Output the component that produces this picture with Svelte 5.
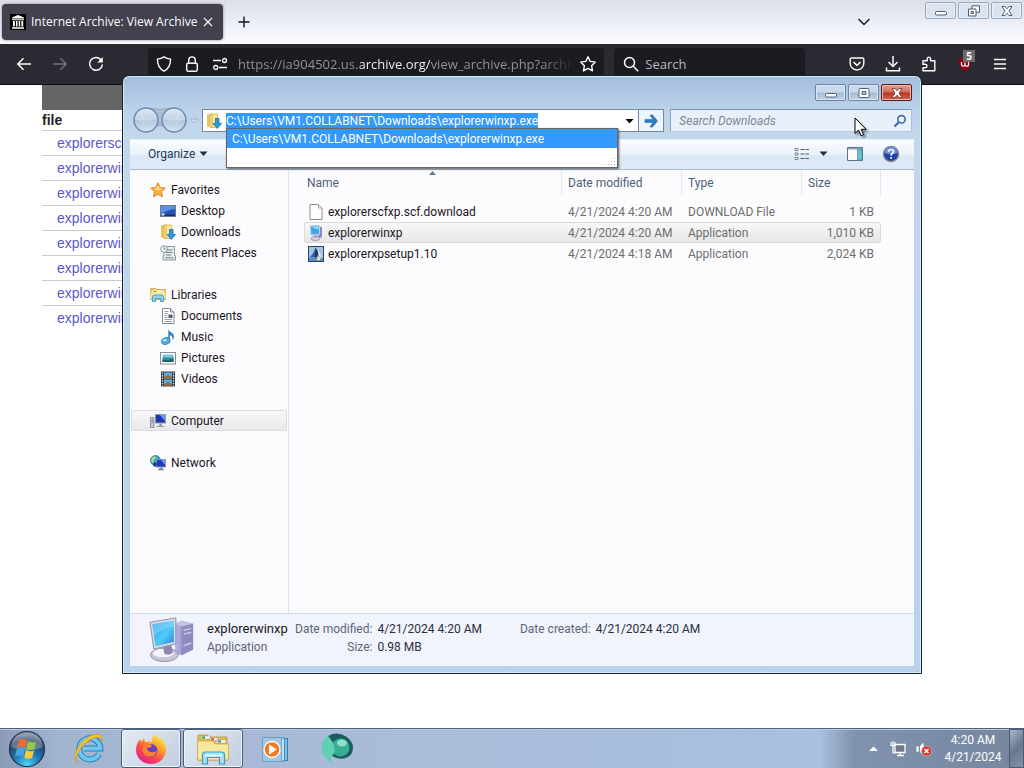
<script>
  import { onMount } from 'svelte';

  let address = $state('C:\\Users\\VM1.COLLABNET\\Downloads\\explorerwinxp.exe');
  let url = $state('https://ia904502.us.archive.org/view_archive.php?archive=/items');
  let addressBox;

  const archiveFiles = [
    'explorerscfxp.scf',
    'explorerwinxp.exe',
    'explorerwinxp.exe',
    'explorerwinxp.exe',
    'explorerwinxp.exe',
    'explorerwinxp.exe',
    'explorerwinxp.exe',
    'explorerwinxp.exe'
  ];

  const places = [
    { name: 'Favorites', icon: 'star', items: [
      { name: 'Desktop', icon: 'desktop' },
      { name: 'Downloads', icon: 'downloads' },
      { name: 'Recent Places', icon: 'recent' }
    ] },
    { name: 'Libraries', icon: 'libraries', items: [
      { name: 'Documents', icon: 'document' },
      { name: 'Music', icon: 'music' },
      { name: 'Pictures', icon: 'pictures' },
      { name: 'Videos', icon: 'videos' }
    ] },
    { name: 'Computer', icon: 'computer', current: true, items: [] },
    { name: 'Network', icon: 'network', items: [] }
  ];

  const files = [
    { name: 'explorerscfxp.scf.download', date: '4/21/2024 4:20 AM', type: 'DOWNLOAD File', size: '1 KB', icon: 'blank' },
    { name: 'explorerwinxp', date: '4/21/2024 4:20 AM', type: 'Application', size: '1,010 KB', icon: 'xp', selected: true },
    { name: 'explorerxpsetup1.10', date: '4/21/2024 4:18 AM', type: 'Application', size: '2,024 KB', icon: 'setup' }
  ];

  onMount(() => {
    addressBox.focus();
    addressBox.select();
  });
</script>

{#snippet icon(name)}
  <svg class="icon" viewBox="0 0 16 16" aria-hidden="true">
    {#if name === 'star'}
      <path d="M8 .8l2.200 4.700 5.100.6-3.800 3.500 1 5.200L8 12.300l-4.500 2.500 1-5.200L.7 6.100l5.100-.6z" fill="#fbb03a" stroke="#d97b16" stroke-width=".9" stroke-linejoin="round" />
      <path d="M8 2.800l1.500 3.500 3.600.4-5.100 1.800-4.900-1.800 3.400-.4z" fill="#ffe08a" />
    {:else if name === 'desktop'}
      <rect x=".5" y="2.500" width="15" height="11" fill="#2456b8" stroke="#6c7a8c" />
      <path d="M1 3h14v3C9 6 6 9 1 10z" fill="#5b92e6" />
      <path d="M1 11.500h14V13H1z" fill="#14306c" />
      <path d="M1.500 10.500h3v2h-3z" fill="#dfe9f7" />
    {:else if name === 'downloads'}
      <path d="M1 1.500l5-1v14l-5-1z" fill="#e8c75a" />
      <path d="M4 1h7.500v13.500H4z" fill="#f7e79c" stroke="#d9b548" stroke-width=".8" />
      <path d="M6 .8v14" stroke="#cfa83e" stroke-width=".8" />
      <path d="M9.500 5.500h3.500v5h2.500L11.300 15.500 7 10.500h2.500z" fill="#2f9bd8" stroke="#1870ac" stroke-width=".8" />
    {:else if name === 'recent'}
      <path d="M4 1.500h10.500v9H15.500v4.500H3v-4.500h1z" fill="#e6ecec" stroke="#8b9a9a" />
      <path d="M6 5h6.500M6 7.500h6.500M6 10h5M5 12.800h8.500" stroke="#6f8584" />
      <circle cx="4" cy="4" r="3.300" fill="#f5f8f8" stroke="#869696" />
      <path d="M4 2v2.200h1.800" fill="none" stroke="#58706f" stroke-width=".8" />
    {:else if name === 'libraries'}
      <path d="M.7 3.500V1.500h5l1 1h8.600v10H.7z" fill="#efcf65" stroke="#c99f37" stroke-width=".8" />
      <path d="M2.500 3.500h11v2h-11z" fill="#fff8d8" />
      <path d="M3.500 4h3v1h-3z" fill="#64b055" />
      <path d="M.7 5.500h14.600v6H.7z" fill="#f9e9a0" />
      <path d="M2.500 14.500V10q0-2 2-2h7q2 0 2 2v4.500h-3v-3h-5v3z" fill="#8fd2ea" stroke="#3c9cc2" stroke-width=".9" />
    {:else if name === 'document'}
      <path d="M2.500.5h8l3.500 3.500v11.500H2.500z" fill="#fff" stroke="#7d8894" />
      <path d="M10.500.5V4H14" fill="#d6dde4" stroke="#7d8894" />
      <path d="M4.500 3.500h4M4.500 5.500h3.500M4.500 7.500h3M4.500 9.500h3M4.500 11.500h7.500M4.500 13.500h7.500" stroke="#8a96a3" stroke-width=".9" />
      <path d="M8.500 6.500h4v3.500h-4z" fill="#48607a" />
    {:else if name === 'music'}
      <path d="M8.300 0c.6 3.200 6 3.500 5.700 8-.1 1.300-.6 2.300-1.400 3.200.5-3-1-4.300-2.700-4.900V12H8.300z" fill="#3787c6" />
      <ellipse cx="5.800" cy="12" rx="4.400" ry="3.400" transform="rotate(-18 5.800 12)" fill="#4fa9e4" stroke="#2c73b4" stroke-width=".7" />
      <ellipse cx="4.800" cy="11.200" rx="2" ry="1.200" fill="#b4e0f8" />
    {:else if name === 'pictures'}
      <rect x=".5" y="2.500" width="15" height="11.500" fill="#fff" stroke="#849099" />
      <path d="M2.500 4.500h11v7.500h-11z" fill="#7cc6e4" />
      <path d="M2.500 8c4-2 6 1 11-1v5h-11z" fill="#2f8f86" />
      <path d="M2.500 10c4 0 7 0 11-1v3h-11z" fill="#1d5f76" />
    {:else if name === 'videos'}
      <rect x="1" y=".5" width="14" height="15" fill="#343c44" />
      <path d="M4 1.500h8v6H4zM4 8.500h8v6H4z" fill="#58b0e2" />
      <path d="M4 6l4-2 4 2v1.500H4zM4 13l4-2 4 2v1.500H4z" fill="#a3652f" />
      <path d="M2.500 1.500v14M13.500 1.500v14" stroke="#eef3f6" stroke-width="1.200" stroke-dasharray="1.300 1.300" />
    {:else if name === 'computer'}
      <path d="M.5 4.500H4v10H.5z" fill="#c3c9d2" stroke="#7c8694" stroke-width=".8" />
      <path d="M1.500 7H3M1.500 9H3" stroke="#687482" />
      <rect x="5.500" y="1.500" width="10" height="8.500" fill="#1c36b4" stroke="#8c98ae" />
      <path d="M10 2h5v6z" fill="#6d94f0" />
      <path d="M9.300 10.500h2.700v2.500h2.500v1H6.500v-1h2.800z" fill="#929cab" />
    {:else if name === 'network'}
      <circle cx="5.500" cy="5.500" r="5" fill="#3d9dc4" stroke="#246a94" stroke-width=".7" />
      <path d="M2 2.500c2-1.500 4-1.500 4 0s-3 2-2 4-2 2-3-1z" fill="#a5dc88" />
      <rect x="6.500" y="4.500" width="9" height="7.500" fill="#1a3dbc" stroke="#8795ad" />
      <path d="M11 5h4v5z" fill="#6b97f2" />
      <path d="M3.500 7.500h3v4h-3z" fill="#1d2f85" />
      <path d="M9.500 12.500h3v1.500h1.500v1.200H8V14h1.500z" fill="#7b8799" />
    {:else if name === 'blank'}
      <path d="M2 .5h8.500L14 4v11.500H2z" fill="#fff" stroke="#8d8d8d" />
      <path d="M10.500.5V4H14" fill="#eee" stroke="#a5a5a5" />
    {:else if name === 'xp'}
      <path d="M9 1.500l5 .5v10l-4 2z" fill="#8e87c4" />
      <path d="M2 1l9.500-1v9.500L3 10z" fill="#3ba4ea" stroke="#c9d3e4" />
      <path d="M3 2l7.500-.8v3.300z" fill="#9be1fa" />
      <ellipse cx="7.500" cy="13.500" rx="4.500" ry="2" fill="#d6d3e4" stroke="#8d88ac" stroke-width=".8" />
      <path d="M6 10h3v3H6z" fill="#a9a4c8" />
    {:else if name === 'setup'}
      <rect x=".5" y=".5" width="15" height="15" fill="#a9c4e2" stroke="#24436f" />
      <path d="M7.500 1.500c2 3 3 6 3 10h-9C4 9 6.500 6 7.500 1.500z" fill="#2c5fae" />
      <path d="M7.500 1.500c2 3 3 6 3 10H7z" fill="#15376f" />
      <path d="M10 4l3.500 7H11z" fill="#eef5fc" />
      <path d="M1 12h14v3H1z" fill="#5b8cc4" />
      <path d="M9.500 9.500l4 2-1.500 3H8.500z" fill="#e8e3c2" stroke="#7a8798" stroke-width=".6" />
    {/if}
  </svg>
{/snippet}

<div class="screen">
  <main class="browser">
    <header class="tabs">
      <div class="tab">
        <svg class="icon" viewBox="0 0 16 16" aria-hidden="true">
          <path d="M0 0h16v16H0z" fill="#000" />
          <path d="M8 1l6 2.500v1H2v-1zM2 5.300h12v.9H2zM3 7h1.800v5.500H3zM6 7h1.500v5.500H6zM8.700 7h1.500v5.500H8.700zM11.400 7h1.800v5.500h-1.800zM2 13.300h12v1.500H2z" fill="#fff" />
        </svg>
        <span class="tab-title">Internet Archive: View Archive</span>
        <button class="plain" aria-label="Close tab">
          <svg width="12" height="12" viewBox="0 0 12 12"><path d="M2 2l8 8M10 2l-8 8" stroke="#fbfbfe" stroke-width="1.100" /></svg>
        </button>
      </div>
      <button class="plain new-tab" aria-label="New tab">
        <svg width="14" height="14" viewBox="0 0 14 14"><path d="M7 1.500v11M1.500 7h11" stroke="#15141a" stroke-width="1.400" /></svg>
      </button>
      <button class="plain list-tabs" aria-label="List all tabs">
        <svg width="14" height="10" viewBox="0 0 14 10"><path d="M1.500 2L7 7.500 12.500 2" fill="none" stroke="#15141a" stroke-width="1.400" /></svg>
      </button>
      <div class="captions back">
        <button aria-label="Minimize browser"><svg width="14" height="12" viewBox="0 0 14 12"><rect x="1.500" y="6.500" width="11" height="3.500" rx="1" fill="#fff" stroke="#535c6b" /></svg></button>
        <button aria-label="Restore browser"><svg width="14" height="12" viewBox="0 0 14 12"><path d="M5 .8h7.500v6.500H5z" fill="#fff" stroke="#535c6b" /><path d="M1.500 4h7.500v7H1.500z" fill="#fff" stroke="#535c6b" /><path d="M4 6.500h2.500v2H4z" fill="#cdd8e6" stroke="#535c6b" /></svg></button>
        <button aria-label="Close browser"><svg width="14" height="12" viewBox="0 0 14 12"><path d="M2 1.500h3L7 3.800l2-2.300h3L9 6l3 4.500H9L7 8.200l-2 2.300H2L5 6z" fill="#fff" stroke="#535c6b" /></svg></button>
      </div>
    </header>

    <nav class="toolbar">
      <div class="travel">
        <button class="plain" aria-label="Back"><svg width="16" height="16" viewBox="0 0 16 16"><path d="M15 8H2M7.500 2.300L1.800 8l5.700 5.700" fill="none" stroke="#fbfbfe" stroke-width="1.500" /></svg></button>
        <button class="plain" aria-label="Forward"><svg width="16" height="16" viewBox="0 0 16 16"><path d="M1 8h13M8.500 2.300L14.200 8l-5.700 5.700" fill="none" stroke="#74737b" stroke-width="1.500" /></svg></button>
        <button class="plain" aria-label="Reload"><svg width="16" height="16" viewBox="0 0 16 16"><path d="M13.300 4.200A6.400 6.400 0 1 0 14.400 8.500" fill="none" stroke="#fbfbfe" stroke-width="1.500" /><path d="M14.800 1v5.500H9.300z" fill="#fbfbfe" /></svg></button>
      </div>
      <div class="urlbar">
        <svg width="16" height="16" viewBox="0 0 16 16" aria-hidden="true"><path d="M8 .9c2 1.400 4.300 2 6.600 2.200 0 5.600-1.700 9.700-6.600 12C3.100 12.800 1.400 8.700 1.400 3.100 3.700 2.900 6 2.300 8 .9z" fill="none" stroke="#fbfbfe" stroke-width="1.400" /></svg>
        <svg width="16" height="16" viewBox="0 0 16 16" aria-hidden="true"><rect x="2.700" y="7.200" width="10.600" height="8" rx="1.400" fill="none" stroke="#fbfbfe" stroke-width="1.400" /><path d="M4.700 7V4.200a3.300 3.300 0 0 1 6.600 0V7" fill="none" stroke="#fbfbfe" stroke-width="1.400" /></svg>
        <svg width="16" height="16" viewBox="0 0 16 16" aria-hidden="true"><path d="M1 4.500h8M7 11.500h8" stroke="#fbfbfe" stroke-width="1.400" /><circle cx="12.500" cy="4.500" r="2" fill="none" stroke="#fbfbfe" stroke-width="1.300" /><circle cx="3.700" cy="11.500" r="2" fill="none" stroke="#fbfbfe" stroke-width="1.300" /></svg>
        <input class="url" aria-label="Web address" spellcheck="false" bind:value={url} />
        <button class="plain" aria-label="Bookmark this page"><svg width="18" height="18" viewBox="0 0 18 18"><path d="M9 1.700l2.200 4.700 5.100.7-3.700 3.600.9 5.200L9 13.400l-4.500 2.500.9-5.200L1.700 7.100l5.100-.7z" fill="none" stroke="#fbfbfe" stroke-width="1.400" stroke-linejoin="round" /></svg></button>
      </div>
      <label class="searchbar">
        <svg width="16" height="16" viewBox="0 0 16 16" aria-hidden="true"><circle cx="6.500" cy="6.500" r="5" fill="none" stroke="#fbfbfe" stroke-width="1.500" /><path d="M10.200 10.200l5 5" stroke="#fbfbfe" stroke-width="1.500" /></svg>
        <input aria-label="Search the web" placeholder="Search" />
      </label>
      <div class="tools">
        <button class="plain" aria-label="Save to Pocket"><svg width="16" height="16" viewBox="0 0 16 16"><path d="M2.500 2h11q1.300 0 1.300 1.300V7.500a6.800 6.500 0 0 1-13.600 0V3.300Q1.200 2 2.500 2z" fill="none" stroke="#fbfbfe" stroke-width="1.400" /><path d="M4.500 6L8 9.400 11.500 6" fill="none" stroke="#fbfbfe" stroke-width="1.500" /></svg></button>
        <button class="plain" aria-label="Downloads"><svg width="16" height="16" viewBox="0 0 16 16"><path d="M8 0v10M3.500 6L8 10.500 12.500 6M1.500 11.500v3.200h13v-3.200" fill="none" stroke="#fbfbfe" stroke-width="1.500" /></svg></button>
        <button class="plain" aria-label="Extensions"><svg width="16" height="16" viewBox="0 0 16 16"><path d="M2 7.500V4.800h4.200V2.900a1.700 1.700 0 0 1 3.400 0v1.900h4.200v10H2v-3h2.200a1.800 1.800 0 0 0 0-3.600H1.300" fill="none" stroke="#fbfbfe" stroke-width="1.400" stroke-linejoin="round" /></svg></button>
        <button class="plain shield" aria-label="Content blocker, 5 blocked">
          <svg width="16" height="16" viewBox="0 0 16 16"><path d="M8 .5c2 1.400 4.500 2 6.500 2 0 6-1.500 10-6.500 13-5-3-6.500-7-6.500-13 2 0 4.500-.6 6.500-2z" fill="#8d0410" /><path d="M4.500 6v2.700q0 1.500 1.700 1.500T8 8.700V6.500v2.200q0 1.500 1.800 1.500t1.700-1.500V6" fill="none" stroke="#fff" stroke-width="1.200" /></svg>
          <span class="badge">5</span>
        </button>
        <button class="plain" aria-label="Menu"><svg width="14" height="14" viewBox="0 0 14 14"><path d="M1 2.500h12M1 7h12M1 11.500h12" stroke="#fbfbfe" stroke-width="1.400" /></svg></button>
      </div>
    </nav>

    <article class="page">
      <div class="masthead"></div>
      <table class="listing">
        <thead><tr><th>file</th></tr></thead>
        <tbody>
          {#each archiveFiles as file}
            <tr><td><a href="#file">{file}</a></td></tr>
          {/each}
        </tbody>
      </table>
    </article>
  </main>

  <section class="window" aria-label="Downloads">
    <div class="titlebar">
      <div class="captions">
        <button aria-label="Minimize"><svg width="14" height="12" viewBox="0 0 14 12"><rect x="1.500" y="6.500" width="11" height="3.500" rx="1" fill="#fff" stroke="#53657f" /></svg></button>
        <button aria-label="Maximize"><svg width="14" height="12" viewBox="0 0 14 12"><rect x="2" y="1.500" width="10" height="9" rx="1" fill="#fff" stroke="#53657f" /><path d="M5 4.500h4v3H5z" fill="#a9c0dc" stroke="#53657f" /></svg></button>
        <button class="close" aria-label="Close"><svg width="14" height="12" viewBox="0 0 14 12"><path d="M2 1.500h3L7 3.800l2-2.300h3L9 6l3 4.500H9L7 8.200l-2 2.300H2L5 6z" fill="#fff" stroke="#6c2c2c" stroke-width=".8" /></svg></button>
      </div>
    </div>

    <div class="navrow">
      <div class="history">
        <svg width="66" height="28" viewBox="0 0 66 28" aria-hidden="true">
          <defs>
            <linearGradient id="orb" x1="0" y1="0" x2="0" y2="1">
              <stop offset="0" stop-color="#dde8f4" /><stop offset=".48" stop-color="#c3d4e7" /><stop offset=".52" stop-color="#b1c6de" /><stop offset="1" stop-color="#d7e6f5" />
            </linearGradient>
          </defs>
          <path d="M14 2q14 3 28 0v20q-14-5-28 0z" fill="#a7bfd9" stroke="#8fa6c1" />
          <circle cx="14" cy="14" r="12" fill="url(#orb)" stroke="#758ba8" stroke-width="1.500" />
          <circle cx="42" cy="14" r="12" fill="url(#orb)" stroke="#758ba8" stroke-width="1.500" />
          <path d="M7 14l5-5v3.500h8v3h-8V19z" fill="#dbe7f3" opacity=".3" />
          <path d="M49 14l-5-5v3.500h-8v3h8V19z" fill="#dbe7f3" opacity=".3" />
          <path d="M58 13h8L62 17z" fill="#d2e0f0" stroke="#93a9c3" stroke-width=".8" />
        </svg>
      </div>
      <div class="address">
        {@render icon('downloads')}
        <input aria-label="Address" spellcheck="false" bind:value={address} bind:this={addressBox} />
        <button class="plain" aria-label="Previous locations"><svg width="9" height="6" viewBox="0 0 9 6"><path d="M.5 1h8l-4 4.500z" fill="#000" /></svg></button>
        <button class="plain go" aria-label="Go to address"><svg width="14" height="14" viewBox="0 0 14 14"><path d="M6 1h2.500l5 6-5 6H6l3-4.600H1V5.600h8z" fill="#2f7fc4" stroke="#215d96" stroke-width=".6" /></svg></button>
        <ul class="suggest">
          <li>C:\Users\VM1.COLLABNET\Downloads\explorerwinxp.exe</li>
        </ul>
      </div>
      <label class="find">
        <input aria-label="Search Downloads" placeholder="Search Downloads" />
        <svg width="14" height="14" viewBox="0 0 14 14" aria-hidden="true"><circle cx="8.500" cy="5.300" r="3.700" fill="#eaf3fc" stroke="#3c6ea8" stroke-width="1.600" /><path d="M5.700 8.200L1.500 12.500" stroke="#3c6ea8" stroke-width="2.200" /></svg>
      </label>
    </div>

    <div class="commands">
      <button class="plain organize">Organize <svg width="9" height="6" viewBox="0 0 9 6"><path d="M.5.500h8l-4 4.500z" fill="#1e2f4a" /></svg></button>
      <button class="plain view" aria-label="Change your view">
        <svg width="16" height="14" viewBox="0 0 16 14"><path d="M1 1.500h3v2H1zM1 6h3v2H1zM1 10.500h3v2H1z" fill="#fff" stroke="#6c7886" stroke-width=".9" /><path d="M6.500 2.500h4M11.500 2.500H15M6.500 7h4M11.500 7H15M6.500 11.500h4M11.500 11.500H15" stroke="#4f5c6d" stroke-width="1.200" /></svg>
        <svg width="9" height="6" viewBox="0 0 9 6"><path d="M.5.500h8l-4 4.500z" fill="#1e2f4a" /></svg>
      </button>
      <button class="plain" aria-label="Show the preview pane"><svg width="16" height="16" viewBox="0 0 16 16"><path d="M.5 1.500h15v13H.5z" fill="#fff" stroke="#5d7389" /><path d="M1 2h14v1.500H1z" fill="#8aa5bf" /><path d="M10.500 3.500H15V14h-4.500z" fill="#6cc3cf" stroke="#3d8d9d" stroke-width=".7" /></svg></button>
      <button class="plain" aria-label="Get help"><svg width="18" height="18" viewBox="0 0 18 18"><circle cx="9" cy="9" r="7.500" fill="#2340a4" stroke="#7c8697" stroke-width="1.500" /><path d="M2.800 8a6.200 6.200 0 0 1 12.400 0Q9 10.500 2.800 8z" fill="#6f90dc" /><path d="M6.600 6.800q.2-2.300 2.500-2.300t2.400 2q0 1.200-1.300 2Q9.100 9.200 9.100 10.600M9.100 12v1.800" fill="none" stroke="#fff" stroke-width="1.700" /></svg></button>
    </div>

    <div class="body">
      <nav class="places">
        {#each places as group}
          <section>
            <a class="root" class:current={group.current} href="#place">{@render icon(group.icon)}{group.name}</a>
            {#each group.items as item}
              <a class="child" href="#place">{@render icon(item.icon)}{item.name}</a>
            {/each}
          </section>
        {/each}
      </nav>
      <div class="files">
        <table>
          <colgroup><col class="c-name" /><col class="c-date" /><col class="c-type" /><col class="c-size" /></colgroup>
          <thead>
            <tr>
              <th class="sorted">Name<svg class="sort" width="7" height="4" viewBox="0 0 7 4"><path d="M0 4l3.500-4L7 4z" fill="#5d7f95" /></svg></th>
              <th>Date modified</th><th>Type</th><th>Size</th>
            </tr>
          </thead>
          <tbody>
            {#each files as file}
              <tr class:selected={file.selected}>
                <td class="name"><span>{@render icon(file.icon)}{file.name}</span></td>
                <td>{file.date}</td>
                <td>{file.type}</td>
                <td class="size">{file.size}</td>
              </tr>
            {/each}
          </tbody>
        </table>
      </div>
    </div>

    <footer class="details">
      <svg class="big" viewBox="0 0 48 48" aria-hidden="true">
        <defs>
          <linearGradient id="glass" x1="0" y1="0" x2="1" y2="1"><stop offset="0" stop-color="#1e8fe8" /><stop offset=".55" stop-color="#52cbfa" /><stop offset="1" stop-color="#2a86e0" /></linearGradient>
          <linearGradient id="tower" x1="0" y1="0" x2="1" y2="0"><stop offset="0" stop-color="#b9b6e2" /><stop offset="1" stop-color="#7a76ae" /></linearGradient>
        </defs>
        <path d="M27 7l7-3 12 3v27l-12 6-7-3z" fill="url(#tower)" />
        <path d="M34 10l12-3v27l-12 6z" fill="#8f8abf" />
        <path d="M27 7l7-3 12 3-12 3z" fill="#c5c2e6" />
        <path d="M36 14l8-2M36 18l8-2M36 30l8-3" stroke="#dad7f0" stroke-width="1.300" />
        <ellipse cx="16" cy="39.500" rx="14.500" ry="7" fill="#c9c6d8" stroke="#8d89a6" />
        <ellipse cx="15" cy="37.500" rx="11" ry="4.500" fill="#f5f4fa" />
        <path d="M14 29l9-2 2 10q-5 4-9 1z" fill="#8d88b4" />
        <path d="M1 5.500L28 1v27L5 33.500z" fill="#dadce6" stroke="#8c8da6" />
        <path d="M3.500 7.500L26 3.800v22.400L6.500 30.500z" fill="url(#glass)" />
        <path d="M3.500 7.500L26 3.800v6Q14 11 5 20z" fill="#8fd8fa" opacity=".55" />
      </svg>
      <div class="facts who"><strong>explorerwinxp</strong><span>Application</span></div>
      <dl class="facts">
        <dt>Date modified:</dt><dd>4/21/2024 4:20 AM</dd>
        <dt>Size:</dt><dd>0.98 MB</dd>
      </dl>
      <dl class="facts">
        <dt>Date created:</dt><dd>4/21/2024 4:20 AM</dd>
      </dl>
    </footer>
  </section>

  <footer class="taskbar">
    <button class="task start" aria-label="Start">
      <svg width="38" height="38" viewBox="0 0 38 38">
        <defs>
          <radialGradient id="start" cx=".5" cy=".95" r=".95"><stop offset="0" stop-color="#4fd6f6" /><stop offset=".4" stop-color="#1c78b4" /><stop offset=".75" stop-color="#27415f" /><stop offset="1" stop-color="#8797ac" /></radialGradient>
        </defs>
        <circle cx="19" cy="19" r="17.500" fill="url(#start)" stroke="#1c3656" stroke-width="1.200" />
        <path d="M3 17Q5 3 19 3t16 14Q19 24 3 17z" fill="#fff" opacity=".28" />
        <path d="M11 10q4-2 8 .5l-1.800 7.500q-4-2.300-8-.5z" fill="#ee6a35" />
        <path d="M20.200 11.300q4 2.200 8 .3l-1.800 7.400q-4 2-8-.3z" fill="#94c83e" />
        <path d="M8.900 18.800q4-1.800 8 .5l-1.800 7.500q-4-2.300-8-.5z" fill="#4aa3e2" />
        <path d="M18 20q4 2.300 8 .4l-1.800 7.400q-4 2-8-.3z" fill="#fbcb3a" />
      </svg>
    </button>
    <button class="task" aria-label="Internet Explorer">
      <svg width="32" height="32" viewBox="0 0 32 32">
        <path d="M26 21a10.500 10.500 0 1 1 1.300-5.500H11" fill="none" stroke="#247fc0" stroke-width="6" />
        <path d="M26 21a10.500 10.500 0 1 1 1.300-5.500H11" fill="none" stroke="#6cc8f0" stroke-width="4" />
        <path d="M28 9Q30 2.500 21 5 10 9 5 20t1 9q-5 1-4-7Q6 8 18 2.500 32-2 28 9z" fill="#f6c532" stroke="#cf9720" stroke-width=".7" />
      </svg>
    </button>
    <button class="task open" aria-label="Firefox">
      <svg width="32" height="32" viewBox="0 0 32 32">
        <defs><linearGradient id="fox" x1=".85" y1=".05" x2=".25" y2=".95"><stop offset="0" stop-color="#fff04a" /><stop offset=".35" stop-color="#ffa52c" /><stop offset=".65" stop-color="#ff4f45" /><stop offset="1" stop-color="#e0218a" /></linearGradient></defs>
        <path d="M20 1q2 3 5 5 0-1 0-2 6 6 6 13a15 14 0 0 1-30 0Q1 11 5 6l1 3 3-4q0 2 1.500 4Q14 8 17 9q0-5 3-8z" fill="url(#fox)" />
        <circle cx="16" cy="17.500" r="6.500" fill="#6540c6" />
        <path d="M9.500 11q6-1 7.500 1.500-1 2.500-5 2.500 0 3 4 4 3 .5 6-1-2 6-7.500 5.500-7-1-7-7.500 0-3 2-5z" fill="#ff8130" />
      </svg>
    </button>
    <button class="task open" aria-label="Windows Explorer">
      <svg width="34" height="32" viewBox="0 0 34 32">
        <path d="M2 5V2h9l2 2h18v23H2z" fill="#e4bd55" stroke="#b98f32" stroke-width=".8" />
        <path d="M5 3h9v3H5zM14 5h8v3h-8zM20 7h10v3H20z" fill="#fff" stroke="#a9a16c" stroke-width=".6" />
        <path d="M6 3.500h3v2H6z" fill="#37a044" /><path d="M15 5.500h3v2h-3z" fill="#d5432f" /><path d="M22 7.500h3v2h-3z" fill="#3f86c9" />
        <path d="M1.500 8H17l2 3h13.500v16h-31z" fill="#f7e89f" stroke="#cda742" stroke-width=".8" />
        <path d="M6.500 31V22q0-3 3-3h16q3 0 3 3v9h-5v-6.500h-12V31z" fill="#a8e0f2" stroke="#3b9dc4" stroke-width="1.200" />
        <path d="M9 22.500h17" stroke="#fff" stroke-width="1.500" />
      </svg>
    </button>
    <button class="task" aria-label="Media Player">
      <svg width="28" height="28" viewBox="0 0 28 28">
        <path d="M8 3.500h18.500v22H8z" fill="#88bde2" stroke="#347cb6" />
        <path d="M5 3h18.500v23H5z" fill="#c7e2f4" stroke="#3f86bd" />
        <path d="M1.500 2.500h19v24h-19z" fill="#a3c6e4" stroke="#6aa0cc" />
        <circle cx="11" cy="14.500" r="8" fill="#f17d22" stroke="#fff" stroke-width="1.300" />
        <path d="M8 9.500l8 5-8 5z" fill="#fff" />
      </svg>
    </button>
    <button class="task" aria-label="CollabVM">
      <svg width="34" height="34" viewBox="0 0 34 34">
        <path d="M8 4Q17-1 26 4.500q7 5 7 11 0 9-9 11-10 1-14-5z" fill="#1c5e60" />
        <circle cx="20.500" cy="15.500" r="9" fill="#36ad94" />
        <ellipse cx="22" cy="11" rx="5" ry="3.500" fill="#8fe2ca" />
        <path d="M8 4Q1 8 1.500 17q1 8 11 15-2-5-1-8 4-3 3-8-1-6-6.500-12z" fill="#61cfb4" />
      </svg>
    </button>
    <div class="tray">
      <button class="plain more" aria-label="Show hidden icons"><svg width="9" height="5" viewBox="0 0 9 5"><path d="M0 5l4.500-4.500L9 5z" fill="#fff" /></svg></button>
      <svg width="16" height="16" viewBox="0 0 16 16" role="img" aria-label="Network"><path d="M5 3.500h10v8H5z" fill="#6d7b92" stroke="#fff" stroke-width="1.300" /><path d="M7 14.500h7M10.300 12v2" stroke="#fff" stroke-width="1.300" /><path d="M1 1v3.500h4V1M3 0v4M3 5v7h2" fill="none" stroke="#fff" stroke-width="1.200" /></svg>
      <svg width="17" height="16" viewBox="0 0 17 16" role="img" aria-label="Volume muted"><path d="M1 5h3v6H1zM4.500 5L9 1v14l-4.500-4z" fill="#fff" stroke="#5f6c82" stroke-width=".5" /><circle cx="11.500" cy="10" r="5" fill="#d33a35" stroke="#f3b6b2" stroke-width=".6" /><path d="M9.500 8l4 4M13.500 8l-4 4" stroke="#fff" stroke-width="1.500" /></svg>
      <time class="clock" datetime="2024-04-21T04:20"><span>4:20 AM</span><span>4/21/2024</span></time>
      <button class="show-desktop" aria-label="Show desktop"></button>
    </div>
  </footer>

  <svg class="pointer" width="14" height="20" viewBox="0 0 14 20" aria-hidden="true"><path d="M1 1v15.500l3.600-3.400L7 18.700l2.600-1.100-2.400-5.300h4.900z" fill="#fff" stroke="#000" /></svg>
</div>

<style>
  :global(body) { background: #fff; }
  .screen {
    position: relative;
    display: flex;
    flex-direction: column;
    min-height: 100vh;
    font: 12px/16px Roboto, "Open Sans", sans-serif;
    color: #1c1424;
    overflow: hidden;
  }
  button, input { font: inherit; color: inherit; }
  a { color: inherit; text-decoration: none; }
  svg { display: block; flex: none; }
  .icon { width: 16px; height: 16px; }
  .plain {
    display: flex;
    align-items: center;
    justify-content: center;
    padding: 0;
    border: 0;
    background: none;
  }

  /* Browser */
  .browser { flex: 1; display: flex; flex-direction: column; font-family: "Open Sans", "Noto Sans", sans-serif; }
  .tabs {
    display: flex;
    align-items: center;
    height: 44px;
    padding-left: 2px;
    background: linear-gradient(#dcdfe8, #eceef6 50%, #fafbfe);
  }
  .tab {
    display: flex;
    align-items: center;
    gap: 5px;
    box-sizing: border-box;
    width: 221px;
    height: 36px;
    padding: 0 10px 0 8px;
    border-radius: 4px;
    background: #42414d;
    box-shadow: 0 0 3px #888;
    color: #fbfbfe;
  }
  .tab-title { flex: 1; white-space: nowrap; }
  .new-tab { width: 42px; }
  .list-tabs { margin-left: auto; margin-right: 54px; }
  .captions { display: flex; gap: 2px; }
  .captions button {
    display: flex;
    align-items: center;
    justify-content: center;
    width: 31px;
    height: 17px;
    padding: 0;
    border: 1px solid #6d84a3;
    border-radius: 2px;
    background: linear-gradient(#c8d9ec 48%, #a3bbd6 52%, #bdd2ea);
    box-shadow: inset 0 0 0 1px #dce8f5;
  }
  .captions.back { align-self: flex-start; margin: 2px 2px 0 0; }
  .captions.back button { border-color: #98a8bf; background: #dae4f1; box-shadow: inset 0 0 0 1px #e9f0f8; }
  .captions .close { border-color: #5a1d21; background: linear-gradient(#e5a197, #cf6a5b 48%, #b93423 52%, #d46a50); box-shadow: inset 0 0 0 1px #eab5ac; }

  .toolbar {
    display: flex;
    align-items: center;
    height: 41px;
    border-bottom: 1px solid #0c0c0d;
    box-sizing: border-box;
    background: #2b2a33;
    color: #fbfbfe;
    font-size: 13px;
  }
  .travel { display: flex; gap: 20px; width: 132px; padding-left: 16px; }
  .urlbar, .searchbar {
    display: flex;
    align-items: center;
    height: 32px;
    border-radius: 4px;
    background: #1c1b22;
  }
  .urlbar { flex: 459; gap: 12px; padding: 0 7px 0 8px; min-width: 0; box-sizing: border-box; }
  .searchbar { flex: 189; gap: 6px; margin-left: 10px; padding-left: 9px; min-width: 0; box-sizing: border-box; }
  .toolbar input { flex: 1; min-width: 0; padding: 0; border: 0; outline: 0; background: none; }
  .toolbar input::placeholder { color: #b9b9bf; opacity: 1; }
  .toolbar .url {
    margin: 0 -6px 0 -2px;
    background: linear-gradient(90deg, #96959c 122px, #fbfbfe 122px 192px, #96959c 192px calc(100% - 32px), transparent);
    -webkit-background-clip: text;
    background-clip: text;
    color: transparent;
  }
  .tools { display: flex; align-items: center; gap: 20px; padding: 0 17px 0 44px; }
  .shield { position: relative; }
  .badge {
    position: absolute;
    top: -6px;
    left: 6px;
    width: 12px;
    background: #6c6c70;
    color: #fff;
    font-size: 10px;
    line-height: 12px;
    font-weight: 700;
  }

  .page { padding: 0 110px 0 42px; font: 14px/18px "Liberation Sans", Arial, sans-serif; }
  .masthead { height: 25px; background: #666; }
  .listing { width: 100%; border-collapse: collapse; }
  .listing th { height: 20px; padding: 0; text-align: left; color: #222; }
  .listing td { height: 24px; padding: 0 0 0 15px; border-top: 1px solid #ccc; color: #5a58cc; }

  /* Explorer window */
  .window {
    position: absolute;
    top: 75px;
    left: 122px;
    right: 102px;
    bottom: 94px;
    display: flex;
    flex-direction: column;
    box-sizing: border-box;
    padding: 0 7px 7px;
    border: 1px solid #10222e;
    border-radius: 7px 7px 0 0;
    background: linear-gradient(#a3bedb, #bcd3eb 36px, #c3d7ec 60px, #b9d1ea);
    box-shadow: inset 0 0 0 1px #d5ecf8;
  }
  .titlebar { display: flex; justify-content: flex-end; height: 33px; }
  .titlebar .captions { margin: 8px 2px 0 0; height: 17px; }
  .navrow { display: flex; height: 23px; padding: 0 2px; }
  .history { margin-top: -3px; width: 70px; }
  .address, .find {
    display: flex;
    align-items: center;
    box-sizing: border-box;
    height: 23px;
    border: 1px solid #7189a6;
    min-width: 0;
  }
  .address { position: relative; flex: 472; background: #fff; padding-left: 3px; }
  .address > input {
    flex: 1;
    min-width: 0;
    height: 16px;
    margin-left: 4px;
    padding: 0;
    border: 0;
    outline: 0;
    background: none;
    caret-color: transparent;
  }
  .address > input::selection { background: #39f; color: #fff; }
  .address .go { width: 25px; height: 21px; margin-left: 4px; border-left: 1px solid #7189a6; background: #edf5fc; }
  .suggest {
    position: absolute;
    z-index: 2;
    top: 18px;
    left: 23px;
    right: 45px;
    height: 38px;
    margin: 0;
    padding: 0;
    border: 1px solid #666;
    background: #fff;
    box-shadow: 1px 1px 2px #555;
    list-style: none;
    color: #fff;
  }
  .suggest::after {
    content: "";
    position: absolute;
    right: 1px;
    bottom: 1px;
    width: 12px;
    height: 12px;
    background: radial-gradient(circle, #aaa 1px, transparent 1px) 0 0 / 3px 3px;
    clip-path: polygon(100% 0, 100% 100%, 0 100%);
  }
  .suggest li { padding: 2px 5px 1px; background: #39f; white-space: nowrap; }
  .find { flex: 235; margin-left: 6px; padding: 0 4px 0 8px; background: #e8f0fa; border-color: #8097b4 #a9bfd8 #b9cce2 #8fa6c2; }
  .find input { flex: 1; min-width: 0; padding: 0; border: 0; outline: 0; background: none; }
  .find input::placeholder { color: #7c8896; opacity: 1; font-style: italic; }

  .commands {
    display: flex;
    align-items: center;
    gap: 19px;
    height: 28px;
    margin-top: 7px;
    padding: 0 14px 1px 18px;
    border-top: 1px solid #e6f0fa;
    border-bottom: 1px solid #a7b9cf;
    box-sizing: content-box;
    background: linear-gradient(#fbfdff, #e9f1fa 50%, #dce7f5 55%, #dfeaf7);
    color: #1e395b;
  }
  .organize { gap: 4px; margin-right: auto; }
  .view { gap: 9px; }

  .body { flex: 1; display: flex; min-height: 0; background: #fcfcfe; }
  .places { box-sizing: border-box; width: 159px; padding: 9px 1px 0; border-right: 1px solid #d9e3f1; }
  .places section { margin-bottom: 21px; }
  .places a { display: flex; align-items: center; gap: 5px; box-sizing: border-box; height: 21px; border: 1px solid transparent; border-radius: 2px; }
  .places .root { padding-left: 18px; }
  .places .child { padding-left: 28px; }
  .places .current { border-color: #dcdcdf; background: linear-gradient(#f8f8fa, #e8e8ea); }
  .files { flex: 1; min-width: 0; padding-left: 15px; }
  .files table { width: 577px; table-layout: fixed; border-collapse: separate; border-spacing: 0; }
  .c-name { width: 258px; }
  .c-date, .c-type { width: 120px; }
  .files th {
    height: 25px;
    padding: 0 0 0 6px;
    border-right: 1px solid #e3e8f0;
    text-align: left;
    font-weight: 400;
    color: #4c607a;
  }
  .files th.sorted { position: relative; padding-left: 3px; }
  .sort { position: absolute; top: 1px; left: 50%; margin-left: -4px; }
  .files th, .files td { box-sizing: border-box; white-space: nowrap; }
  .files td { height: 21px; padding: 0 0 0 6px; border: solid transparent; border-width: 1px 0; color: #6d6d6d; }
  .files tbody::before { content: ""; display: block; height: 6px; }
  .files td.name { padding-left: 3px; color: #1c1424; border-left-width: 1px; }
  .name span { display: flex; align-items: center; gap: 4px; }
  .files td.size { padding-right: 6px; text-align: right; border-right-width: 1px; }
  .files .selected td { border-color: #d9d9d9; background: linear-gradient(#f8f8f9, #e6e6e6); }
  .selected td:first-child { border-radius: 3px 0 0 3px; }
  .selected td:last-child { border-radius: 0 3px 3px 0; }

  .details {
    display: flex;
    align-items: flex-start;
    height: 52px;
    padding-left: 18px;
    border-top: 1px solid #d0dbea;
    background: #f1f4fc;
    color: #5a6779;
  }
  .big { width: 48px; height: 46px; margin-top: 3px; }
  .facts { margin: 6px 0 0; line-height: 18px; white-space: nowrap; }
  .who { display: flex; flex-direction: column; width: 82px; margin-left: 11px; }
  .who strong { font-size: 13px; font-weight: 400; color: #1c1424; }
  dl.facts { display: grid; grid-template-columns: auto auto; align-content: start; column-gap: 5px; margin-left: 6px; }
  dl.facts + dl.facts { margin-left: 38px; }
  dt { text-align: right; }
  dd { margin: 0; color: #2a2f40; }

  /* Taskbar */
  .taskbar {
    display: flex;
    align-items: stretch;
    gap: 2px;
    box-sizing: border-box;
    height: 40px;
    border-top: 1px solid #4c617f;
    background: linear-gradient(90deg, #8c9bb5, #a3b4cf 60px, #a9bbd6 300px, #a8c1df 820px, #8092ad calc(100% - 170px), #76869f);
    box-shadow: inset 0 1px 0 #bfcde0;
  }
  .task {
    display: flex;
    align-items: center;
    justify-content: center;
    box-sizing: border-box;
    width: 60px;
    padding: 0;
    border: 1px solid transparent;
    border-radius: 3px;
    background: none;
  }
  .start { width: 57px; padding-right: 3px; }
  .open { border-color: #4d5d78; background: linear-gradient(135deg, #e4ebf4, #c1cddf); box-shadow: inset 0 0 0 1px #eff4fa; }
  .tray { display: flex; align-items: center; gap: 9px; margin-left: auto; color: #fff; }
  .more { margin-right: 3px; }
  .clock { display: flex; flex-direction: column; width: 60px; margin-left: 2px; text-align: center; line-height: 17px; }
  .tray .show-desktop { width: 15px; height: 39px; margin-left: -3px; padding: 0; border: 1px solid #4c5b73; background: linear-gradient(135deg, #a9b6c8, #69788f 50%, #8593a8); }

  .pointer { position: absolute; z-index: 3; top: 117px; left: 854px; filter: drop-shadow(2px 2px 1px #0006); }
</style>
